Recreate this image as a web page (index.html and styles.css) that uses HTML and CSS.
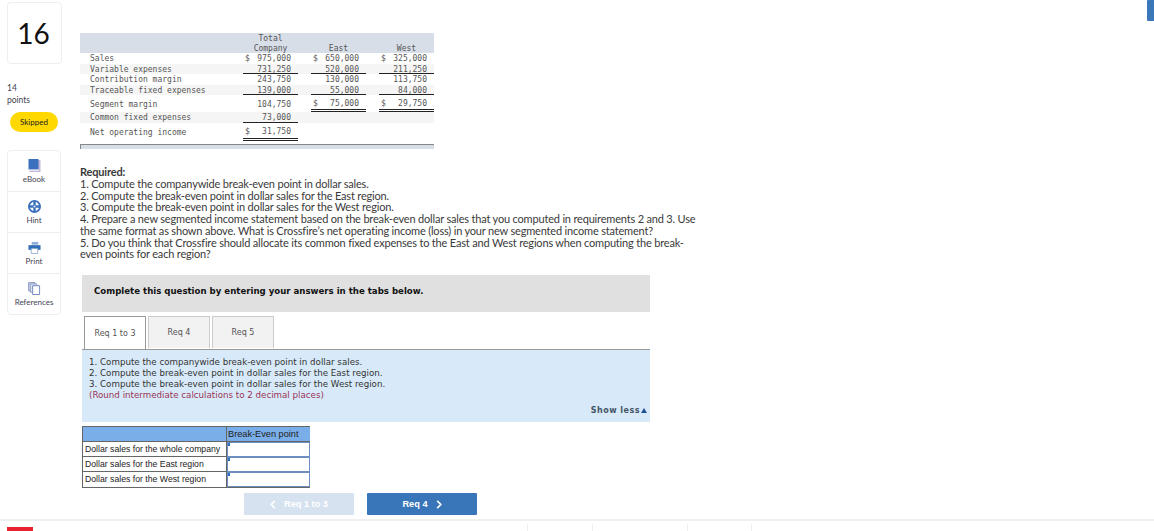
FILE: index.html
```html
<!DOCTYPE html>
<html lang="en">
<head>
<meta charset="utf-8">
<title>Question 16</title>
<link rel="stylesheet" href="styles.css">
</head>
<body>
<div class="page">
  <div class="layout">
    <aside class="side">
      <div class="qnum">16</div>
      <div class="points">14<br>points</div>
      <div class="pill">Skipped</div>
      <div class="tools">
        <div class="tool">
          <svg class="ico" viewBox="0 0 13 13"><path d="M1.500 1h11v12h-11z" fill="#c4b8d8"/><path d="M.5 0h10v10.500H.5z" fill="#3a70bd"/><path d="M.5 10.500h10.500V12H.5z" fill="#e8e8f2"/></svg>
          <span>eBook</span>
        </div>
        <div class="tool">
          <svg class="ico" viewBox="0 0 14 14"><circle cx="7" cy="7" r="6" fill="#fff" stroke="#3a70bd" stroke-width="2"/><path d="M5.700 1h2.600v12H5.700zM1 5.700h12v2.600H1z" fill="#3a70bd"/><circle cx="7" cy="7" r="1.200" fill="#dfe5f2"/></svg>
          <span>Hint</span>
        </div>
        <div class="tool">
          <svg class="ico" viewBox="0 0 14 14"><path d="M4 1h7v3H4z" fill="#8fb0da"/><path d="M.5 4.500h13v5H.5z" fill="#2f6db5"/><path d="M3.500 8h7v5.500h-7z" fill="#fff" stroke="#7d9dcc" stroke-width=".8"/></svg>
          <span>Print</span>
        </div>
        <div class="tool">
          <svg class="ico" viewBox="0 0 14 14"><path d="M.5.5h7v9h-7z" fill="#c9d0e6" stroke="#8d9cc6"/><path d="M2.500 2h7v9h-7z" fill="#dfe3f0" stroke="#8d9cc6"/><path d="M5 4h7.500v9.500H5z" fill="#fff" stroke="#6a86ba"/></svg>
          <span>References</span>
        </div>
      </div>
    </aside>
    <main class="main">
      <div class="stmt">
        <div class="row head"><span></span><span class="ctr">Total<br>Company</span><span class="ctr">East</span><span class="ctr">West</span></div>
        <div class="row"><span class="lab">Sales</span><span class="val"><i>$</i>975,000</span><span class="val"><i>$</i>650,000</span><span class="val"><i>$</i>325,000</span></div>
        <div class="row alt"><span class="lab">Variable expenses</span><span class="val u">731,250</span><span class="val u">520,000</span><span class="val u">211,250</span></div>
        <div class="row"><span class="lab">Contribution margin</span><span class="val">243,750</span><span class="val">130,000</span><span class="val">113,750</span></div>
        <div class="row alt"><span class="lab">Traceable fixed expenses</span><span class="val u">139,000</span><span class="val u">55,000</span><span class="val u">84,000</span></div>
        <div class="row big"><span class="lab">Segment margin</span><span class="val">104,750</span><span class="val dbl"><i>$</i>75,000</span><span class="val dbl"><i>$</i>29,750</span></div>
        <div class="row alt"><span class="lab">Common fixed expenses</span><span class="val u">73,000</span><span></span><span></span></div>
        <div class="row big net"><span class="lab">Net operating income</span><span class="val dbl"><i>$</i>31,750</span><span></span><span></span></div>
        <div class="stmt-foot"></div>
      </div>
      <div class="req">
        <strong>Required:</strong><br>
        1. Compute the companywide break-even point in dollar sales.<br>
        2. Compute the break-even point in dollar sales for the East region.<br>
        3. Compute the break-even point in dollar sales for the West region.<br>
        4. Prepare a new segmented income statement based on the break-even dollar sales that you computed in requirements 2 and 3. Use<br>
        the same format as shown above. What is Crossfire’s net operating income (loss) in your new segmented income statement?<br>
        5. Do you think that Crossfire should allocate its common fixed expenses to the East and West regions when computing the break-<br>
        even points for each region?
      </div>
      <div class="banner">Complete this question by entering your answers in the tabs below.</div>
      <div class="tabs">
        <div class="tab on">Req 1 to 3</div>
        <div class="tab">Req 4</div>
        <div class="tab">Req 5</div>
      </div>
      <div class="panel">
        <div>1. Compute the companywide break-even point in dollar sales.</div>
        <div>2. Compute the break-even point in dollar sales for the East region.</div>
        <div>3. Compute the break-even point in dollar sales for the West region.</div>
        <div class="note">(Round intermediate calculations to 2 decimal places)</div>
        <div class="less">Show less<svg class="tri" viewBox="0 0 6 5"><path d="M3 0l3 5H0z" fill="#1f4f96"/></svg></div>
      </div>
      <div class="answer">
        <div class="a-head"></div><div class="a-head a-title">Break-Even point</div>
        <div class="a-lab">Dollar sales for the whole company</div><div class="a-in"></div>
        <div class="a-lab">Dollar sales for the East region</div><div class="a-in"></div>
        <div class="a-lab">Dollar sales for the West region</div><div class="a-in"></div>
      </div>
      <div class="nav">
        <div class="btn off"><svg class="chev" viewBox="0 0 6 10"><path d="M5 1L1 5l4 4" fill="none" stroke="#fff" stroke-width="1.800"/></svg>Req 1 to 3</div>
        <div class="btn">Req 4<svg class="chev" viewBox="0 0 6 10"><path d="M1 1l4 4-4 4" fill="none" stroke="#fff" stroke-width="1.800"/></svg></div>
      </div>
    </main>
  </div>
  <footer class="foot">
    <div class="logo"></div>
    <div class="foot-cells"><span class="c1"></span><span class="c2"></span><span class="c3"></span><span class="c4"></span></div>
  </footer>
  <div class="scrollmark"></div>
</div>
</body>
</html>
```
FILE: styles.css
```css
* { box-sizing: border-box; }
html, body { margin: 0; height: 100%; overflow: hidden; background: #fff; }
.page { position: relative; height: 531px; overflow: hidden; font-family: Lato, "Open Sans", sans-serif; color: #333; }
.layout { display: flex; height: 519px; }
.side { width: 80px; flex: none; padding: 2px 0 0 7px; }
.qnum { width: 55px; height: 62px; border: 1px solid #eee; border-radius: 4px; display: flex; align-items: center; justify-content: center; padding-right: 2px; font-size: 28px; font-weight: 400; color: #111; }
.points { margin-top: 18px; font-size: 8.500px; line-height: 12px; color: #445; }
.pill { margin: 6px 0 0 3px; width: 48px; height: 20px; border-radius: 10px; background: #ffd800; display: flex; align-items: center; justify-content: center; font-size: 8px; color: #222; }
.tools { margin-top: 18px; width: 54px; height: 165px; border: 1px solid #eee; border-radius: 4px; display: flex; flex-direction: column; }
.tool { flex: 1; border-bottom: 1px solid #eee; display: flex; flex-direction: column; align-items: center; padding-top: 8px; gap: 2px; font-size: 8px; line-height: 10px; color: #445; }
.tool:last-child { border-bottom: 0; }
.ico { width: 13px; height: 13px; display: block; }
.main { flex: 1; min-width: 0; padding-top: 33px; }
.stmt { width: 354px; font-family: "DejaVu Sans Mono", monospace; font-size: 8px; color: #555; }
.row { display: grid; grid-template-columns: 150px 55px 55px 55px; grid-template-rows: minmax(0, 1fr); column-gap: 13px; height: 10.500px; line-height: 12px; }
.head { background: #d8dee8; height: 20px; line-height: 10px; }
.row.alt { background: #f5f5f5; }
.row.big { height: 17px; line-height: 10px; }
.row.big > span { display: flex; align-items: center; height: 100%; padding-top: 2px; }
.row.big > .val { justify-content: flex-end; }
.row.big > .dbl { padding-top: 4px; }
.row.big > .val i { top: 4px; }
.row.net { height: 18px; }
.lab { padding-left: 10px; white-space: nowrap; }
.ctr { text-align: center; align-self: end; position: relative; top: 1px; }
.val { position: relative; text-align: right; padding-right: 7px; height: 100%; }
.val i { position: absolute; left: 2px; font-style: normal; }
.u { border-bottom: 1px solid #222; line-height: 11px; }
.dbl { border-bottom: 3px double #222; }
.stmt-foot { margin-top: 3.500px; height: 5px; background: #d8dee8; border-top: 1px solid #888; border-left: 1px solid #888; }
.req { margin-top: 17px; white-space: nowrap; font-size: 11px; letter-spacing: -.18px; line-height: 11.750px; color: #3a3a3a; }
.req strong { font-weight: 700; }
.banner { margin: 15px 0 0 2px; width: 568px; height: 37px; background: #e0e0e0; padding: 0 0 5px 12px; display: flex; align-items: center; font-family: "DejaVu Sans", sans-serif; font-weight: 700; font-size: 8.600px; color: #111; }
.tabs { display: flex; gap: 2px; margin: 4px 0 0 4px; height: 33px; position: relative; z-index: 1; }
.tab { width: 62px; height: 32px; background: #f2f2f2; border: 1px solid #ccc; border-bottom: 0; display: flex; align-items: center; justify-content: center; font-family: "DejaVu Sans", sans-serif; font-size: 8px; color: #555; }
.tab.on { background: #fff; border-color: #999; height: 33px; }
.panel { position: relative; margin-left: 2px; width: 568px; height: 73px; background: #d8eaf9; border-top: 1px solid #999; padding: 7px 0 0 7px; font-family: "DejaVu Sans", sans-serif; font-size: 8.700px; line-height: 11px; color: #333; }
.note { color: #993355; }
.less { position: absolute; right: 3px; bottom: 6px; display: flex; align-items: center; gap: 1px; font-size: 8px; letter-spacing: .5px; font-weight: 700; color: #456; }
.tri { width: 6px; height: 5px; }
.answer { margin: 4px 0 0 2px; width: 228px; display: grid; grid-template-columns: 144px 83px; grid-auto-rows: 15px; border: 1px solid #666; font-family: "Liberation Sans", sans-serif; font-size: 8.700px; line-height: 14px; color: #222; }
.answer > div { border-bottom: 1px solid #666; }
.answer > div:nth-last-child(-n+2) { border-bottom: 0; }
.answer > div:nth-child(odd) { border-right: 1px solid #666; }
.a-head { background: #7aaee8; }
.a-title { padding-left: 1px; font-size: 9.200px; }
.a-lab { padding-left: 2px; background: #fff; white-space: nowrap; }
.a-in { background: #fff; border: 1px solid #6d8ec0 !important; position: relative; }
.a-in::before { content: ""; position: absolute; left: 0; top: 0; width: 2px; height: 3px; background: #2a6fc0; }
.nav { display: flex; gap: 13px; margin: 5px 0 0 164px; }
.btn { width: 110px; height: 22px; border-radius: 1px; background: #3975b9; color: #fff; display: flex; align-items: center; justify-content: center; gap: 8px; font-family: "Liberation Sans", sans-serif; font-weight: 700; font-size: 9.200px; }
.btn.off { background: #d6e2f0; }
.chev { width: 6px; height: 9px; }
.foot { height: 12px; border-top: 2px solid #f0f0f0; position: relative; padding: 6px 0 0 7px; }
.logo { width: 26px; height: 6px; background: #e8222e; }
.foot-cells { position: absolute; left: 527px; top: 3px; display: flex; height: 10px; }
.foot-cells span { display: block; border-left: 1px solid #eee; }
.c1 { width: 65px; } .c2 { width: 95px; } .c3 { width: 64px; } .c4 { width: 10px; }
.scrollmark { position: absolute; right: 0; top: 0; width: 7px; height: 21px; background: #3a78ba; border-radius: 1px 0 0 1px; }
```
